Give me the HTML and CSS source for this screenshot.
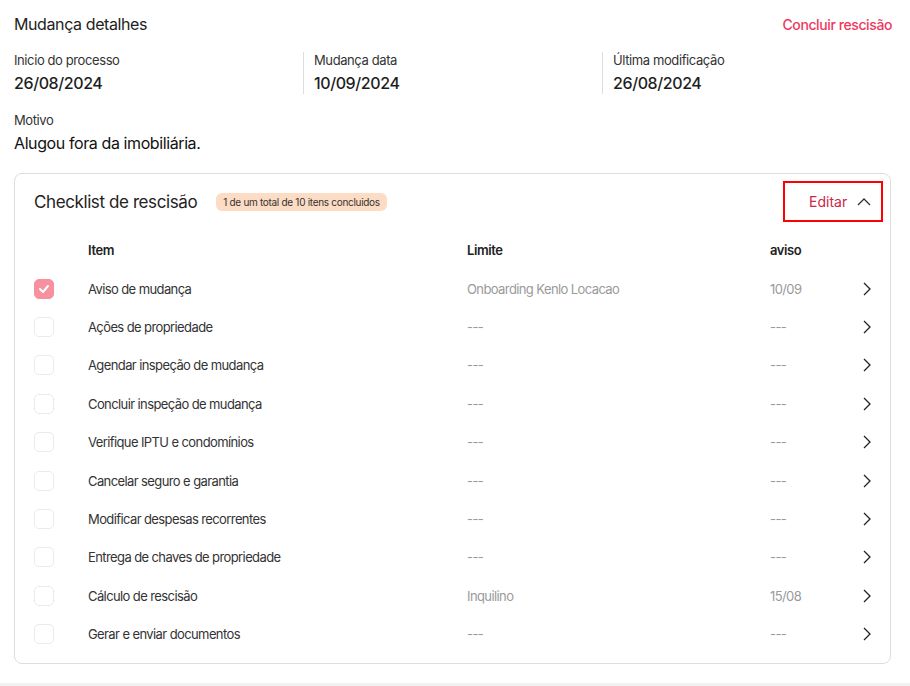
FILE: index.html
```html
<!DOCTYPE html>
<html lang="pt-BR">
<head>
  <meta charset="UTF-8">
  <title>Mudança detalhes</title>
  <link rel="stylesheet" href="styles.css">
</head>
<body>

  <div class="page">
    <div class="top">
      <h2>Mudança detalhes</h2>
      <a class="red-link" href="#">Concluir rescisão</a>
    </div>

    <div class="info-row">
      <div class="info">
        <div class="label">Inicio do processo</div>
        <div class="value">26/08/2024</div>
      </div>
      <div class="info sep">
        <div class="label">Mudança data</div>
        <div class="value">10/09/2024</div>
      </div>
      <div class="info sep">
        <div class="label">Última modificação</div>
        <div class="value">26/08/2024</div>
      </div>
    </div>

    <div class="motivo">
      <div class="label">Motivo</div>
      <div class="value">Alugou fora da imobiliária.</div>
    </div>

    <!-- CHECKLIST -->
    <div class="card">
      <div class="card-head">
        <div class="card-title">
          <h3>Checklist de rescisão</h3>
          <span class="badge">1 de um total de 10 itens concluidos</span>
        </div>
        <button class="edit-btn">
          Editar
          <svg width="14" height="8" viewBox="0 0 14 8"><path d="M1 7 L7 1 L13 7" fill="none" stroke="#333" stroke-width="1.3"/></svg>
        </button>
      </div>

      <div class="grid head">
        <span></span>
        <span>Item</span>
        <span>Limite</span>
        <span>aviso</span>
        <span></span>
      </div>

      <div class="grid row">
        <span class="check checked"><svg width="12" height="10" viewBox="0 0 12 10"><path d="M2 5 L5 8 L10 2" fill="none" stroke="#fff" stroke-width="2" stroke-linecap="round" stroke-linejoin="round"/></svg></span>
        <span class="item">Aviso de mudança</span>
        <span class="muted">Onboarding Kenlo Locacao</span>
        <span class="muted">10/09</span>
        <span class="arrow"><svg width="8" height="14" viewBox="0 0 8 14"><path d="M1 1 L7 7 L1 13" fill="none" stroke="#222" stroke-width="1.3"/></svg></span>
      </div>
      <div class="grid row">
        <span class="check"></span>
        <span class="item">Ações de propriedade</span>
        <span class="muted">---</span>
        <span class="muted">---</span>
        <span class="arrow"><svg width="8" height="14" viewBox="0 0 8 14"><path d="M1 1 L7 7 L1 13" fill="none" stroke="#222" stroke-width="1.3"/></svg></span>
      </div>
      <div class="grid row">
        <span class="check"></span>
        <span class="item">Agendar inspeção de mudança</span>
        <span class="muted">---</span>
        <span class="muted">---</span>
        <span class="arrow"><svg width="8" height="14" viewBox="0 0 8 14"><path d="M1 1 L7 7 L1 13" fill="none" stroke="#222" stroke-width="1.3"/></svg></span>
      </div>
      <div class="grid row">
        <span class="check"></span>
        <span class="item">Concluir inspeção de mudança</span>
        <span class="muted">---</span>
        <span class="muted">---</span>
        <span class="arrow"><svg width="8" height="14" viewBox="0 0 8 14"><path d="M1 1 L7 7 L1 13" fill="none" stroke="#222" stroke-width="1.3"/></svg></span>
      </div>
      <div class="grid row">
        <span class="check"></span>
        <span class="item">Verifique IPTU e condomínios</span>
        <span class="muted">---</span>
        <span class="muted">---</span>
        <span class="arrow"><svg width="8" height="14" viewBox="0 0 8 14"><path d="M1 1 L7 7 L1 13" fill="none" stroke="#222" stroke-width="1.3"/></svg></span>
      </div>
      <div class="grid row">
        <span class="check"></span>
        <span class="item">Cancelar seguro e garantia</span>
        <span class="muted">---</span>
        <span class="muted">---</span>
        <span class="arrow"><svg width="8" height="14" viewBox="0 0 8 14"><path d="M1 1 L7 7 L1 13" fill="none" stroke="#222" stroke-width="1.3"/></svg></span>
      </div>
      <div class="grid row">
        <span class="check"></span>
        <span class="item">Modificar despesas recorrentes</span>
        <span class="muted">---</span>
        <span class="muted">---</span>
        <span class="arrow"><svg width="8" height="14" viewBox="0 0 8 14"><path d="M1 1 L7 7 L1 13" fill="none" stroke="#222" stroke-width="1.3"/></svg></span>
      </div>
      <div class="grid row">
        <span class="check"></span>
        <span class="item">Entrega de chaves de propriedade</span>
        <span class="muted">---</span>
        <span class="muted">---</span>
        <span class="arrow"><svg width="8" height="14" viewBox="0 0 8 14"><path d="M1 1 L7 7 L1 13" fill="none" stroke="#222" stroke-width="1.3"/></svg></span>
      </div>
      <div class="grid row">
        <span class="check"></span>
        <span class="item">Cálculo de rescisão</span>
        <span class="muted">Inquilino</span>
        <span class="muted">15/08</span>
        <span class="arrow"><svg width="8" height="14" viewBox="0 0 8 14"><path d="M1 1 L7 7 L1 13" fill="none" stroke="#222" stroke-width="1.3"/></svg></span>
      </div>
      <div class="grid row">
        <span class="check"></span>
        <span class="item">Gerar e enviar documentos</span>
        <span class="muted">---</span>
        <span class="muted">---</span>
        <span class="arrow"><svg width="8" height="14" viewBox="0 0 8 14"><path d="M1 1 L7 7 L1 13" fill="none" stroke="#222" stroke-width="1.3"/></svg></span>
      </div>
    </div>
  </div>

  <div class="bottom-bar"></div>

</body>
</html>
```

FILE: styles.css
```css
body {
  margin: 0;
  background-color: white;
  font-family: Inter, "Noto Sans", sans-serif;
  color: #222;
  letter-spacing: -0.4px;
}

.page {
  padding: 14px 19px 0 14px;
  height: 669px;
  box-sizing: border-box;
}

.top {
  display: flex;
  justify-content: space-between;
  align-items: center;
  height: 20px;
}

h2 {
  margin: 0;
  font-size: 16px;
  font-weight: 400;
  line-height: 20px;
}

.red-link {
  color: #f0385c;
  text-decoration: none;
  font-size: 14px;
  font-weight: 500;
  margin-right: -1px;
}

.info-row {
  display: grid;
  grid-template-columns: 289px 299px 1fr;
  margin-top: 18px;
}

.info.sep {
  border-left: 1px solid #ddd;
  padding-left: 10px;
}

.label {
  font-size: 13px;
  line-height: 17px;
  color: #333;
}

.value {
  font-size: 16px;
  line-height: 22px;
  margin-top: 3px;
  font-weight: 500;
  color: #1e1e1e;
}

.motivo {
  margin-top: 18px;
}

.motivo .value {
  font-weight: 400;
  color: #111;
}

.card {
  margin-top: 19px;
  border: 1px solid #ddd;
  border-radius: 8px;
  padding: 7px 7px 10px 19px;
}

.card-head {
  display: flex;
  justify-content: space-between;
  align-items: center;
}

.card-title {
  display: flex;
  align-items: center;
  gap: 19px;
}

h3 {
  margin: 0;
  font-size: 17px;
  font-weight: 400;
  color: #222;
}

.badge {
  background-color: #fcdcc4;
  border-radius: 6px;
  font-size: 10px;
  line-height: 18px;
  padding: 0 7px;
  color: #333;
  letter-spacing: -0.3px;
}

.edit-btn {
  display: flex;
  align-items: center;
  gap: 10px;
  width: 100px;
  height: 41px;
  box-sizing: border-box;
  padding: 0 0 0 24px;
  border: 2px solid #f00;
  background: white;
  color: #cc2745;
  font-family: inherit;
  font-size: 14px;
  letter-spacing: 0;
  cursor: pointer;
}

.grid {
  display: grid;
  grid-template-columns: 54px 379px 303px 88px 18px;
  align-items: center;
  height: 38.4px;
}

.grid.head {
  margin-top: 9px;
  font-size: 13px;
  font-weight: 600;
  color: #222;
}

.row {
  font-size: 13px;
  letter-spacing: -0.6px;
}

.item {
  color: #333;
}

.muted {
  color: #9a9a9a;
}

.check {
  width: 20px;
  height: 20px;
  box-sizing: border-box;
  border: 1px solid #ebebeb;
  border-radius: 5px;
  display: flex;
  align-items: center;
  justify-content: center;
}

.check.checked {
  background-color: #f7919f;
  border-color: #f7919f;
}

.arrow {
  display: flex;
  justify-content: center;
}

.bottom-bar {
  height: 17px;
  background-color: #f1f1f1;
  border-top: 14px solid white;
}
```
